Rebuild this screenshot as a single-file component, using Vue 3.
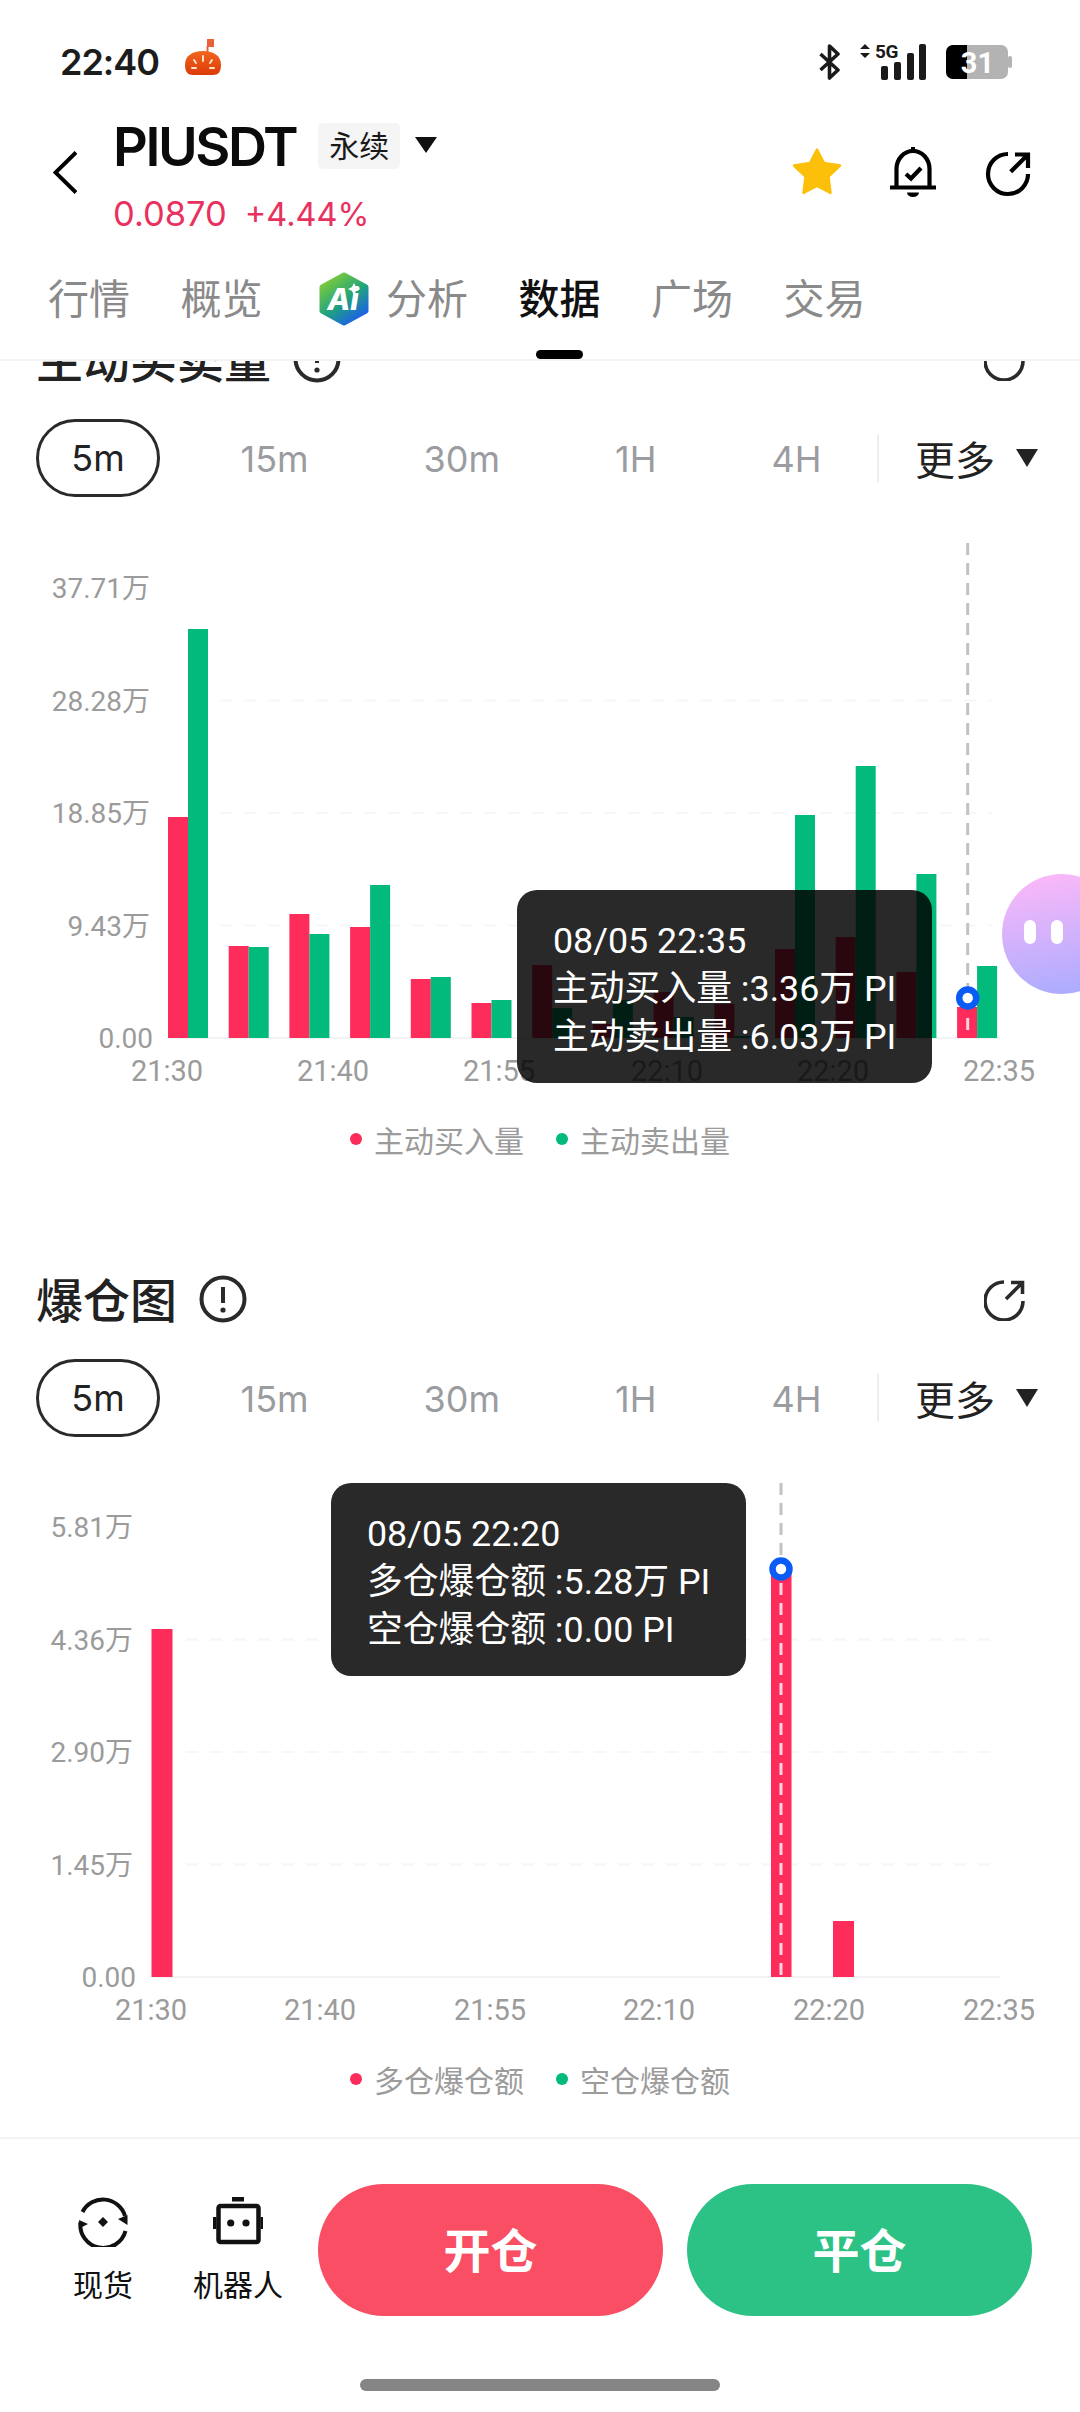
<template>
  <div class="phone">
    <header class="top">
      <div class="status">
        <span class="clock">22:40</span>
        <svg class="tomato" width="36" height="36" viewBox="0 0 36 36">
          <defs>
            <linearGradient id="tomatoFill" x1="0" y1="0" x2="0" y2="1">
              <stop offset="0" stop-color="#f2661f" />
              <stop offset="1" stop-color="#dc3a08" />
            </linearGradient>
          </defs>
          <rect x="22" y="0" width="7" height="8" fill="#e8623a" />
          <rect x="21.5" y="7" width="2" height="6" fill="#e8623a" />
          <path d="M18 12C29 12 36 17 36 26C36 33 33 36 28 36H8C3 36 0 33 0 26C0 17 7 12 18 12Z" fill="url(#tomatoFill)" />
          <path d="M18 17V22M9 21L11 24M27 21L25 24M7 29H11M25 29H29" stroke="#ffe1c8" stroke-width="2" stroke-linecap="round" />
        </svg>
        <div class="status-right">
          <svg width="21" height="36" viewBox="0 0 21 36" fill="none" stroke="#1a1a1a" stroke-width="3.6">
            <path d="M1.5 10L19 26L10.5 34V2L19 10L1.5 26" stroke-linejoin="round" />
          </svg>
          <svg class="signal" width="66" height="36" viewBox="0 0 66 36">
            <path d="M5 0L10 5H0ZM0 9H10L5 14Z" fill="#1a1a1a" />
            <text class="five-g" x="15" y="14">5G</text>
            <rect x="21" y="22" width="7" height="14" rx="2" fill="#1a1a1a" />
            <rect x="34" y="18" width="7" height="18" rx="2" fill="#1a1a1a" />
            <rect x="47" y="9" width="7" height="27" rx="2" fill="#1a1a1a" />
            <rect x="59" y="0" width="7" height="36" rx="2" fill="#1a1a1a" />
          </svg>
          <svg width="66" height="34" viewBox="0 0 66 34">
            <rect x="0" y="0" width="62" height="34" rx="7" fill="#b3b3b3" />
            <rect x="62" y="11" width="4" height="12" rx="2" fill="#b3b3b3" />
            <path d="M7 0H21V34H7A7 7 0 0 1 0 27V7A7 7 0 0 1 7 0Z" fill="#000" />
            <text class="battery-num" x="31.5" y="28" text-anchor="middle">31</text>
          </svg>
        </div>
      </div>

      <div class="title-row">
        <svg class="back" width="24" height="43" viewBox="0 0 24 43" fill="none" stroke="#000" stroke-width="4">
          <path d="M23 1.5L2.5 21.5L23 41.5" />
        </svg>
        <div class="title-col">
          <div class="title-line">
            <span class="symbol">PIUSDT</span>
            <span class="tag">永续</span>
            <i class="tri tri-title"></i>
          </div>
          <div class="price-line"><span class="last">0.0870</span><span class="change">+4.44%</span></div>
        </div>
        <div class="actions">
          <svg width="50" height="48" viewBox="0 0 50 48">
            <path d="M25 2.5L32 16L48 18.5L36.5 29.5L38.5 46L25 39L11.5 46L13.5 29.5L2 18.5L18 16Z" fill="#fcc00a" stroke="#fcc00a" stroke-width="2.5" stroke-linejoin="round" />
          </svg>
          <svg width="50" height="50" viewBox="0 0 50 50" fill="none" stroke="#000" stroke-width="4.2">
            <rect x="23" y="0" width="4" height="5" fill="#000" stroke="none" />
            <path d="M8.5 39V22A16.5 18 0 0 1 41.5 22V39" />
            <path d="M2 40.5H48" />
            <path d="M18 27L23 31.5L33 21" />
            <path d="M19 45.5H31A6 4.5 0 0 1 19 45.5Z" fill="#000" stroke="none" />
          </svg>
          <svg width="50" height="50" viewBox="0 0 50 50" fill="none" stroke="#000" stroke-width="4.2">
            <path d="M24 7A20 20 0 1 0 44 27" />
            <path d="M26.7 24.7L44 7.5M31 7.5H44V21" />
          </svg>
        </div>
      </div>

      <nav class="tabs">
        <span v-for="tab in tabs" :key="tab.name" class="tab" :class="{ active: tab.active, 'has-logo': tab.logo }">
          <svg v-if="tab.logo" class="ai-logo" width="50" height="54" viewBox="0 0 50 54">
            <defs>
              <linearGradient id="aiFill" x1="0.1" y1="0.1" x2="0.7" y2="1">
                <stop offset="0" stop-color="#7ccb3a" />
                <stop offset="0.55" stop-color="#1fa27f" />
                <stop offset="1" stop-color="#1d63e6" />
              </linearGradient>
            </defs>
            <path d="M25 3L47 15V39L25 51L3 39V15Z" fill="url(#aiFill)" stroke="url(#aiFill)" stroke-width="5" stroke-linejoin="round" />
            <text class="ai-text" x="24" y="38" text-anchor="middle">Ai</text>
            <path d="M35 11L37 15L41 17L37 19L35 23L33 19L29 17L33 15Z" fill="#fff" />
          </svg>
          {{ tab.name }}
        </span>
      </nav>
    </header>

    <main class="content">
      <section v-for="chart in charts" :key="chart.title" class="panel">
        <div class="panel-head">
          <h2>{{ chart.title }}</h2>
          <svg class="info" width="48" height="48" viewBox="0 0 48 48" fill="none" stroke="#2a2a2a" stroke-width="4">
            <circle cx="24" cy="24" r="21.5" />
            <path d="M24 12V28" />
            <circle cx="24" cy="35" r="2.6" fill="#2a2a2a" stroke="none" />
          </svg>
          <svg class="open" width="42" height="42" viewBox="0 0 42 42" fill="none" stroke="#2a2a2a" stroke-width="3.6">
            <path d="M20 3A19 19 0 1 0 39 22" />
            <path d="M22 20L38 4M27 3.5H38.5V15" />
          </svg>
        </div>

        <div class="periods">
          <span class="pill">5m</span>
          <span v-for="p in periods" :key="p" class="period">{{ p }}</span>
          <i class="sep"></i>
          <span class="more">更多</span>
          <i class="tri tri-more"></i>
        </div>

        <div class="plot">
          <svg width="1080" height="603" viewBox="0 0 1080 603">
            <line
              v-for="(label, i) in chart.yLabels.slice(1, 4)"
              :key="label"
              class="grid"
              :x1="chart.gridX"
              :x2="chart.gridEnd"
              :y1="chart.base - 112.5 * (i + 1)"
              :y2="chart.base - 112.5 * (i + 1)"
            />
            <line class="axis" :x1="chart.axisX" x2="1000" :y1="chart.base" :y2="chart.base" />
            <text
              v-for="(label, i) in chart.yLabels"
              :key="label"
              class="tick tick-y"
              :x="i === 0 ? chart.labelRight + 3 : chart.labelRight"
              :y="chart.base - 112.5 * i + 10"
              text-anchor="end"
            >{{ label }}</text>
            <text
              v-for="tick in chart.xLabels"
              :key="tick.text"
              class="tick"
              :x="tick.x"
              :y="chart.base + 43"
              text-anchor="middle"
            >{{ tick.text }}</text>
            <rect
              v-for="(bar, i) in chart.bars"
              :key="i"
              :x="bar.x"
              :y="chart.base - bar.h"
              :width="bar.w"
              :height="bar.h"
              :fill="bar.color"
            />
            <line class="cross" :x1="chart.cross.x" :x2="chart.cross.x" :y1="46" :y2="chart.cross.y" />
            <line class="cross-on-bar" :x1="chart.cross.x" :x2="chart.cross.x" :y1="chart.cross.barFrom" :y2="chart.base" />
            <circle :cx="chart.cross.x" :cy="chart.cross.y" r="8.5" fill="#fff" stroke="#0a5cf5" stroke-width="6.5" />
          </svg>
          <div class="tooltip" :style="{ left: chart.tip.left + 'px', top: chart.tip.top + 'px' }">
            <div v-for="line in chart.tip.lines" :key="line">{{ line }}</div>
          </div>
        </div>

        <div class="legend">
          <span class="legend-item"><i class="dot red"></i>{{ chart.legend[0] }}</span>
          <span class="legend-item"><i class="dot green"></i>{{ chart.legend[1] }}</span>
        </div>
      </section>
    </main>

    <footer class="dock">
      <div class="dock-row">
        <div class="dock-item first">
          <svg width="50" height="50" viewBox="0 0 50 50" fill="none" stroke="#111" stroke-width="4">
            <path d="M4.5 15A23 23 0 0 1 47 19" />
            <path d="M47.5 34A23 23 0 0 1 2.5 25" />
            <path d="M40 22L49.5 18L49.5 28ZM1 23L10 27L2 31Z" fill="#111" stroke="none" />
            <path d="M25 20L30 25L25 30L20 25Z" fill="#111" stroke="none" />
          </svg>
          <span>现货</span>
        </div>
        <div class="dock-item">
          <svg width="50" height="50" viewBox="0 0 50 50" fill="none" stroke="#111" stroke-width="4.5">
            <rect x="19" y="0" width="12" height="4.5" fill="#111" stroke="none" />
            <rect x="5.5" y="9" width="40" height="36" rx="2" />
            <rect x="0" y="20" width="3.5" height="12" fill="#111" stroke="none" />
            <rect x="47.5" y="20" width="3" height="12" fill="#111" stroke="none" />
            <circle cx="17.7" cy="26" r="3.6" fill="#111" stroke="none" />
            <circle cx="33" cy="26" r="3.6" fill="#111" stroke="none" />
          </svg>
          <span>机器人</span>
        </div>
        <button class="cta open-btn">开仓</button>
        <button class="cta close-btn">平仓</button>
      </div>
      <div class="home-bar"></div>
    </footer>

    <div class="buddy"><i></i><i></i></div>
  </div>
</template>

<script setup>
const RED = '#fe2c5a'
const GREEN = '#02ba7c'

const tabs = [
  { name: '行情' },
  { name: '概览' },
  { name: '分析', logo: true },
  { name: '数据', active: true },
  { name: '广场' },
  { name: '交易' },
]

const periods = ['15m', '30m', '1H', '4H']

const buys = [221, 92, 124, 111, 59, 35, 73, 14, 46, 34, 89, 101, 66, 31]
const sells = [409, 91, 104, 153, 61, 38, 30, 38, 21, 2, 223, 272, 164, 72]

const volumeBars = buys.flatMap((h, i) => {
  const x = 168 + 60.7 * i
  return [
    { x, w: 20, h, color: RED },
    { x: x + 20, w: 20, h: sells[i], color: GREEN },
  ]
})

const charts = [
  {
    title: '主动买卖量',
    base: 541,
    axisX: 168,
    gridX: 220,
    gridEnd: 992,
    labelRight: 150,
    yLabels: ['0.00', '9.43万', '18.85万', '28.28万', '37.71万'],
    xLabels: [
      { text: '21:30', x: 167 },
      { text: '21:40', x: 333 },
      { text: '21:55', x: 499 },
      { text: '22:10', x: 667 },
      { text: '22:20', x: 833 },
      { text: '22:35', x: 999 },
    ],
    bars: volumeBars,
    cross: { x: 967.7, y: 501, barFrom: 521 },
    tip: {
      left: 517,
      top: 393,
      lines: ['08/05 22:35', '主动买入量 :3.36万 PI', '主动卖出量 :6.03万 PI'],
    },
    legend: ['主动买入量', '主动卖出量'],
  },
  {
    title: '爆仓图',
    base: 540,
    axisX: 152,
    gridX: 186,
    gridEnd: 997,
    labelRight: 133,
    yLabels: ['0.00', '1.45万', '2.90万', '4.36万', '5.81万'],
    xLabels: [
      { text: '21:30', x: 151 },
      { text: '21:40', x: 320 },
      { text: '21:55', x: 490 },
      { text: '22:10', x: 659 },
      { text: '22:20', x: 829 },
      { text: '22:35', x: 999 },
    ],
    bars: [
      { x: 151.5, w: 21, h: 348, color: RED },
      { x: 771, w: 20.5, h: 409, color: RED },
      { x: 833, w: 21, h: 56, color: RED },
    ],
    cross: { x: 781, y: 132, barFrom: 146 },
    tip: {
      left: 331,
      top: 46,
      lines: ['08/05 22:20', '多仓爆仓额 :5.28万 PI', '空仓爆仓额 :0.00 PI'],
    },
    legend: ['多仓爆仓额', '空仓爆仓额'],
  },
]
</script>

<style>
html,
body {
  margin: 0;
  background: #fff;
}
</style>

<style scoped>
.phone {
  position: relative;
  width: 1080px;
  height: 2412px;
  overflow: hidden;
  display: flex;
  flex-direction: column;
  background: #fff;
  font-family: Inter, "Noto Sans CJK SC", sans-serif;
  color: #111;
}

/* header */
.top {
  flex: none;
  height: 361px;
  box-sizing: border-box;
  border-bottom: 2px solid #f3f3f3;
}
.status {
  display: flex;
  align-items: center;
  height: 52px;
  padding: 36px 68px 28px 60px;
}
.clock {
  font-size: 36px;
  font-weight: 600;
  letter-spacing: -1px;
  color: #1c1c1c;
}
.tomato {
  margin-left: 26px;
  margin-top: -10px;
}
.status-right {
  margin-left: auto;
  display: flex;
  align-items: center;
  gap: 20px;
}
.signal {
  overflow: visible;
}
.five-g {
  font: 700 19px Roboto, sans-serif;
  letter-spacing: -0.5px;
  fill: #1a1a1a;
}
.battery-num {
  font: 700 29px Roboto, sans-serif;
  fill: #fff;
}

.title-row {
  display: flex;
  height: 122px;
  padding-left: 53px;
  padding-right: 46px;
}
.back {
  margin-top: 35px;
}
.title-col {
  margin-left: 36px;
}
.symbol {
  font-size: 54px;
  font-weight: 600;
  color: #0b0b0b;
  letter-spacing: -2.4px;
}
.title-line {
  display: flex;
  align-items: center;
  height: 60px;
}
.tag {
  margin-left: 22px;
  width: 82px;
  height: 46px;
  line-height: 46px;
  text-align: center;
  font-size: 30px;
  background: #f5f5f5;
  border-radius: 5px;
  color: #1a1a1a;
}
.tri {
  display: block;
  width: 0;
  height: 0;
  border-left: 11px solid transparent;
  border-right: 11px solid transparent;
  border-top: 16px solid #111;
}
.tri-title {
  margin-left: 15px;
  margin-top: -2px;
}
.price-line {
  margin-top: 14px;
  display: flex;
  align-items: baseline;
  gap: 18px;
  line-height: 48px;
  color: #e8315f;
}
.last {
  font-size: 34.5px;
}
.change {
  font-size: 32.5px;
}
.actions {
  margin-left: auto;
  display: flex;
  align-items: flex-start;
  gap: 46px;
  padding-top: 31px;
}

.tabs {
  display: flex;
  gap: 50.5px;
  height: 80px;
  margin-top: 21px;
  padding-left: 48px;
}
.tab {
  position: relative;
  display: flex;
  align-items: center;
  font-size: 41px;
  line-height: 80px;
  color: #8a8a8a;
}
.tab.has-logo {
  margin-left: 6px;
}
.ai-logo {
  margin-right: 17px;
}
.ai-text {
  font: italic 800 30px Inter, sans-serif;
  fill: #fff;
}
.tab.active {
  color: #111;
  font-weight: 500;
}
.tab.active::after {
  content: "";
  position: absolute;
  left: 17px;
  bottom: -20px;
  width: 47px;
  height: 9px;
  border-radius: 5px;
  background: #000;
}

/* scrolling area */
.content {
  flex: 1;
  min-height: 0;
  overflow: hidden;
}
.panel:first-child {
  margin-top: -31px;
}
.panel {
  padding-bottom: 92px;
}
.panel-head {
  display: flex;
  align-items: center;
  height: 60px;
  padding: 0 54px 0 36px;
}
.panel-head h2 {
  margin: -5px 0 0;
  font-size: 47px;
  font-weight: 500;
  color: #222;
}
.info {
  margin: -2px 0 0 22px;
}
.open {
  margin: -1px 0 0 auto;
}

.periods {
  display: flex;
  align-items: center;
  height: 78px;
  margin-top: 29px;
  padding-left: 36px;
}
.pill {
  box-sizing: border-box;
  width: 124px;
  height: 78px;
  line-height: 72px;
  margin-right: 23px;
  text-align: center;
  border: 3px solid #2a2a2a;
  border-radius: 39px;
  font-size: 36px;
  color: #222;
}
.period {
  padding: 2px 57.5px 0;
  font-size: 36px;
  color: #9a9c9f;
}
.sep {
  width: 2px;
  height: 48px;
  margin-left: -2px;
  background: #eee;
}
.more {
  margin-left: 36px;
  font-size: 40px;
  color: #222;
}
.tri-more {
  margin-left: 21px;
  border-left-width: 11.5px;
  border-right-width: 11.5px;
  border-top: 18px solid #222;
}

.plot {
  position: relative;
  height: 603px;
}
.plot svg {
  display: block;
}
.grid {
  stroke: #f6f6f6;
  stroke-width: 2;
  stroke-dasharray: 12 12;
}
.axis {
  stroke: #f3f3f3;
  stroke-width: 2;
}
.tick {
  font: 29px Roboto, "Noto Sans CJK SC", sans-serif;
  fill: #9b9b9b;
}
.tick-y {
  font-size: 28px;
}
.cross {
  stroke: #c2c2c2;
  stroke-width: 3;
  stroke-dasharray: 12 8;
}
.cross-on-bar {
  stroke: rgba(255, 255, 255, 0.8);
  stroke-width: 3;
  stroke-dasharray: 12 8;
}
.tooltip {
  position: absolute;
  box-sizing: border-box;
  width: 415px;
  height: 193px;
  padding: 27px 0 0 36px;
  border-radius: 20px;
  background: rgba(0, 0, 0, 0.84);
  color: #fff;
  font: 35.8px/48px Roboto, "Noto Sans CJK SC", sans-serif;
  white-space: nowrap;
}

.legend {
  display: flex;
  justify-content: center;
  align-items: center;
  gap: 32px;
  height: 78px;
}
.legend-item {
  display: flex;
  align-items: center;
  font-size: 30px;
  color: #9b9b9b;
}
.dot {
  width: 12px;
  height: 12px;
  margin-right: 12px;
  border-radius: 50%;
}
.dot.red {
  background: #fe2c5a;
}
.dot.green {
  background: #02ba7c;
}

/* bottom bar */
.dock {
  flex: none;
  height: 275px;
  box-sizing: border-box;
  border-top: 2px solid #f3f3f3;
}
.dock-row {
  display: flex;
  height: 132px;
  margin-top: 45px;
  padding-left: 53px;
}
.dock-item {
  display: flex;
  flex-direction: column;
  align-items: center;
  width: 100px;
  margin-right: 30px;
  padding-top: 13px;
}
.dock-item.first {
  margin-right: 35px;
}
.dock-item span {
  margin-top: 18px;
  font-size: 30px;
  line-height: 40px;
  color: #111;
  white-space: nowrap;
}
.cta {
  width: 345px;
  height: 132px;
  padding: 0 0 5px;
  border: 0;
  border-radius: 66px;
  color: #fff;
  font: 700 47px Inter, "Noto Sans CJK SC", sans-serif;
}
.open-btn {
  background: #f94e64;
}
.close-btn {
  margin-left: 24px;
  background: #2cc185;
}
.home-bar {
  width: 360px;
  height: 12px;
  margin: 63px auto 0;
  border-radius: 6px;
  background: #858585;
}

.buddy {
  position: absolute;
  left: 1002px;
  top: 874px;
  width: 120px;
  height: 120px;
  border-radius: 50%;
  background: linear-gradient(170deg, #ffb9f8, #a6abff);
}
.buddy i {
  position: absolute;
  top: 46px;
  width: 12px;
  height: 24px;
  border-radius: 6px;
  background: #fff;
}
.buddy i:first-child {
  left: 22px;
}
.buddy i:last-child {
  left: 49px;
}
</style>
